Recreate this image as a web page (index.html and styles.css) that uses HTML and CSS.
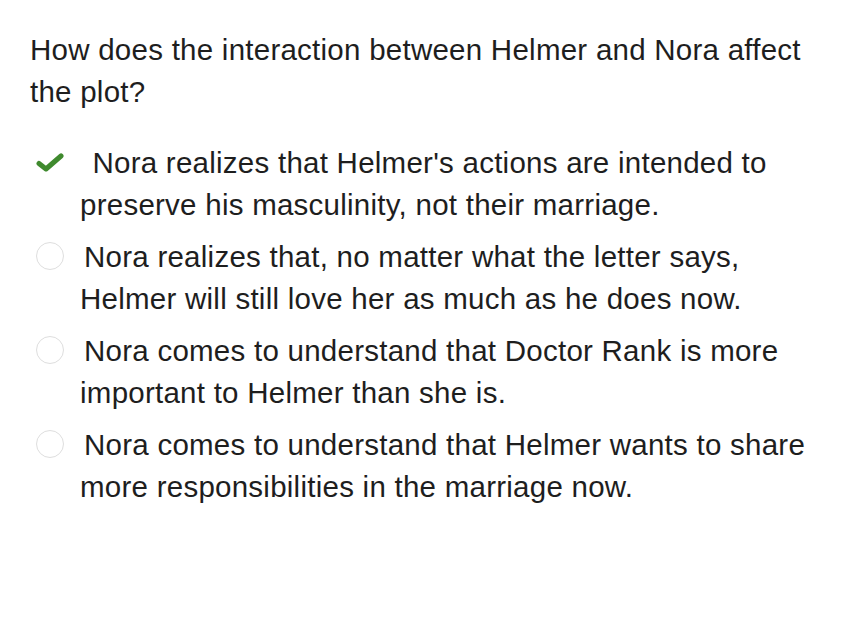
FILE: index.html
```html
<!DOCTYPE html>
<html>
<head>
<meta charset="utf-8">
<link rel="stylesheet" href="styles.css">
</head>
<body>
<div class="question">
  <p class="prompt">How does the interaction between Helmer and Nora affect the plot?</p>
  <ul class="options">
    <li class="option"><span class="mark check"><svg width="28" height="19" viewBox="0 0 28 19"><path d="M3 10.5 L10 16 L25 3" fill="none" stroke="#3f8a2e" stroke-width="5" stroke-linecap="round" stroke-linejoin="round"/></svg></span>&nbsp;Nora realizes that Helmer's actions are intended to preserve his masculinity, not their marriage.</li>
    <li class="option"><span class="mark radio"></span>Nora realizes that, no matter what the letter says, Helmer will still love her as much as he does now.</li>
    <li class="option"><span class="mark radio"></span>Nora comes to understand that Doctor Rank is more important to Helmer than she is.</li>
    <li class="option"><span class="mark radio"></span>Nora comes to understand that Helmer wants to share more responsibilities in the marriage now.</li>
  </ul>
</div>
</body>
</html>
```

FILE: styles.css
```css
html, body {
  margin: 0;
  padding: 0;
  background: #ffffff;
}
body {
  font-family: "Liberation Sans", Arial, sans-serif;
  color: #1e1e1e;
  font-size: 29.5px;
  line-height: 42px;
  letter-spacing: 0.25px;
}
.question {
  padding: 29px 20px 0 30px;
}
.prompt {
  margin: 0 0 29px 0;
}
.options {
  list-style: none;
  margin: 0;
  padding: 0;
}
.option {
  padding-left: 50px;
  text-indent: -44px;
  margin-bottom: 10px;
}
.mark {
  display: inline-block;
  text-indent: 0;
  vertical-align: middle;
  position: relative;
  top: -3px;
}
.check {
  width: 28px;
  height: 19px;
  margin-right: 20px;
}
.check svg {
  display: block;
}
.radio {
  width: 26px;
  height: 26px;
  border: 1.5px solid #dedede;
  border-radius: 50%;
  margin-right: 20px;
}
```
